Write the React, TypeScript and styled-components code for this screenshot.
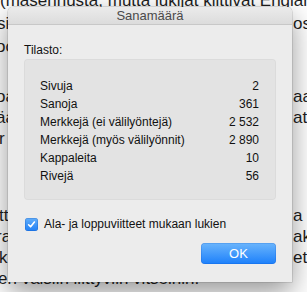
import React from "react";
import styled, { createGlobalStyle } from "styled-components";

const GlobalStyle = createGlobalStyle`
  html, body { margin: 0; padding: 0; background: #ffffff; }
  body { overflow: hidden; }
`;

const Page = styled.div`
  position: relative;
  width: 307px;
  height: 292px;
  overflow: hidden;
  background: #ffffff;
`;

const Document = styled.div`
  display: flex;
  flex-direction: column;
  margin-top: -11px;
  font-family: "Liberation Sans", Arial, sans-serif;
  font-size: 17px;
  color: #1e1e1e;
`;

const Paragraph = styled.div<{ $after: number; $lh: number }>`
  display: flex;
  flex-direction: column;
  margin-bottom: ${(p) => p.$after}px;
  --lh: ${(p) => p.$lh}px;
`;

const Line = styled.div`
  display: grid;
  grid-template-columns: 293px auto;
  height: var(--lh);
  line-height: var(--lh);
  white-space: nowrap;
  overflow: hidden;
`;

const LeftFrag = styled.span<{ $shift: number }>`
  margin-left: ${(p) => p.$shift}px;
`;

const RightFrag = styled.span``;

const Window = styled.div`
  position: absolute;
  left: 8px;
  top: 7px;
  width: 284px;
  height: 275px;
  display: flex;
  flex-direction: column;
  background: #ececec;
  border-radius: 5px 5px 0 0;
  box-shadow: 0 10px 28px rgba(0, 0, 0, 0.42), 0 0 0 0.5px rgba(0, 0, 0, 0.2);
  font-family: "Liberation Sans", Arial, sans-serif;
  color: #111;
`;

const TitleBar = styled.div`
  height: 17px;
  display: flex;
  align-items: center;
  justify-content: center;
  background: linear-gradient(#ebebeb, #dcdcdc);
  border-bottom: 1px solid #c8c8c8;
  border-radius: 5px 5px 0 0;
  font-size: 13px;
  color: #4a4a4a;
`;

const Body = styled.div`
  display: flex;
  flex-direction: column;
  padding: 17px 16px 18px 16px;
`;

const SectionLabel = styled.div`
  font-size: 12px;
  line-height: 16px;
  height: 16px;
  margin-bottom: 1px;
`;

const StatsPanel = styled.div`
  display: flex;
  flex-direction: column;
  background: #e3e3e3;
  border-radius: 4px;
  box-shadow: inset 0 0 0 1px rgba(0, 0, 0, 0.03);
  padding: 18px 17px 15px 16px;
`;

const StatRow = styled.div`
  display: flex;
  justify-content: space-between;
  align-items: center;
  height: 18px;
  font-size: 12px;
`;

const CheckRow = styled.label`
  display: flex;
  align-items: center;
  gap: 6px;
  height: 16px;
  margin-top: 16px;
  padding-left: 1px;
  font-size: 12px;
`;

const CheckBox = styled.span`
  width: 13px;
  height: 13px;
  border-radius: 3px;
  background: linear-gradient(#62aefa, #2080f6);
  box-shadow: inset 0 0 0 0.5px rgba(0, 60, 160, 0.4);
  display: flex;
  align-items: center;
  justify-content: center;
`;

const Footer = styled.div`
  display: flex;
  justify-content: flex-end;
  margin-top: 11px;
`;

const OkButton = styled.button`
  width: 75px;
  height: 21px;
  border: none;
  border-radius: 4px;
  background: linear-gradient(#6bb5fc, #1c80fb);
  box-shadow: inset 0 0 0 0.5px rgba(0, 70, 190, 0.35);
  color: #ffffff;
  font-family: "Liberation Sans", Arial, sans-serif;
  font-size: 13px;
  padding: 0;
`;

const stats: [string, string][] = [
  ["Sivuja", "2"],
  ["Sanoja", "361"],
  ["Merkkejä (ei välilyöntejä)", "2 532"],
  ["Merkkejä (myös välilyönnit)", "2 890"],
  ["Kappaleita", "10"],
  ["Rivejä", "56"],
];

type Frag = [string, string, number];

const paragraphs: { after: number; lh: number; lines: Frag[] }[] = [
  {
    after: 28,
    lh: 23,
    lines: [
      ["  (masennusta, mutta lukijat kiittivät Englanni", "", 0],
      ["si", "os", -3],
      ["oc", "", -4],
    ],
  },
  {
    after: 56,
    lh: 21,
    lines: [
      ["oa", "aa", -4],
      ["äa", "at.", -4],
      ["r", "", -1],
    ],
  },
  {
    after: 0,
    lh: 21,
    lines: [
      ["tt", "a", -1],
      ["ra", "ak", -4],
      ["k", "ett", -1],
      ["en vaisiin liittyviin vitseihin.", "", -2],
    ],
  },
];

export default function App() {
  return (
    <Page>
      <GlobalStyle />
      <Document>
        {paragraphs.map((p, i) => (
          <Paragraph key={i} $after={p.after} $lh={p.lh}>
            {p.lines.map(([l, r, s], j) => (
              <Line key={j}>
                <LeftFrag $shift={s}>{l}</LeftFrag>
                <RightFrag>{r}</RightFrag>
              </Line>
            ))}
          </Paragraph>
        ))}
      </Document>
      <Window>
        <TitleBar>Sanamäärä</TitleBar>
        <Body>
          <SectionLabel>Tilasto:</SectionLabel>
          <StatsPanel>
            {stats.map(([k, v]) => (
              <StatRow key={k}>
                <span>{k}</span>
                <span>{v}</span>
              </StatRow>
            ))}
          </StatsPanel>
          <CheckRow>
            <CheckBox>
              <svg width="9" height="9" viewBox="0 0 9 9">
                <path d="M1.6 4.8 L3.6 6.8 L7.4 2" fill="none" stroke="#fff" strokeWidth="1.6" strokeLinecap="round" strokeLinejoin="round" />
              </svg>
            </CheckBox>
            Ala- ja loppuviitteet mukaan lukien
          </CheckRow>
          <Footer>
            <OkButton>OK</OkButton>
          </Footer>
        </Body>
      </Window>
    </Page>
  );
}
